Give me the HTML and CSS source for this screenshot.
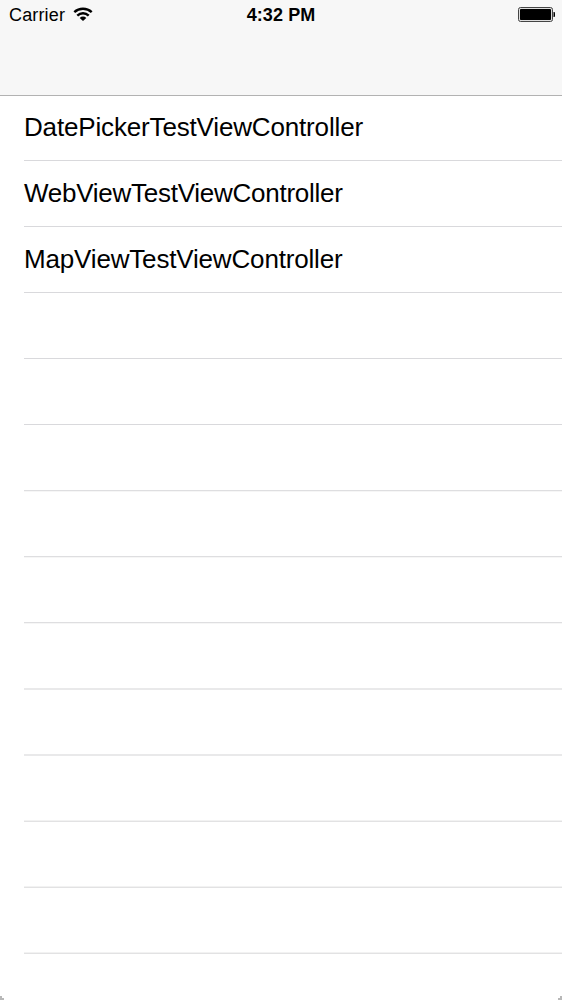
FILE: index.html
```html
<!DOCTYPE html>
<html lang="en">
<head>
<meta charset="utf-8">
<title>Controllers</title>
<link rel="stylesheet" href="styles.css">
</head>
<body>
<main class="screen">
  <header class="navbar">
    <div class="status">
      <div class="status-left">
        <span class="carrier">Carrier</span>
        <svg class="wifi" width="20" height="15" viewBox="0 0 20 15" fill="none" stroke="#000" stroke-width="2.4">
          <path d="M1.3 5.2C6.2.6 13.8.6 18.7 5.2"/>
          <path d="M4.3 8.7C7.6 5.5 12.4 5.5 15.7 8.7"/>
          <path d="M10 14L6.7 10.9C8.6 9.1 11.4 9.1 13.3 10.9Z" fill="#000" stroke="none"/>
        </svg>
      </div>
      <span class="time">4:32 PM</span>
      <div class="status-right">
        <svg class="battery" width="38" height="16" viewBox="0 0 38 16">
          <rect x=".5" y=".5" width="34" height="14" rx="2" fill="#ddd" stroke="#444"/>
          <rect x="2" y="2" width="31" height="11" rx=".8" fill="#000"/>
          <path d="M35.5 5H36.2Q37 5 37 6.2V8.8Q37 10 36.2 10H35.5Z" fill="#000"/>
        </svg>
      </div>
    </div>
  </header>
  <ul class="list">
    <li class="row"><span class="label label-date">DatePickerTestViewController</span></li>
    <li class="row"><span class="label label-web">WebViewTestViewController</span></li>
    <li class="row"><span class="label label-map">MapViewTestViewController</span></li>
    <li class="row"></li>
    <li class="row"></li>
    <li class="row soft-low"></li>
    <li class="row soft-low"></li>
    <li class="row soft-low"></li>
    <li class="row soft-even"></li>
    <li class="row soft-even"></li>
    <li class="row soft-high"></li>
    <li class="row soft-high"></li>
    <li class="row soft-high"></li>
  </ul>
  <footer class="corners">
    <svg width="4" height="4" viewBox="0 0 4 4" fill="#b8b8b8"><path d="M0 0H2V2H4V4H0Z"/></svg>
    <svg width="4" height="4" viewBox="0 0 4 4" fill="#b8b8b8"><path d="M4 0H2V2H0V4H4Z"/></svg>
  </footer>
</main>
</body>
</html>
```
FILE: styles.css
```css
* {
  box-sizing: border-box;
}

body {
  margin: 0;
  background: #fff;
  color: #000;
  font-family: "Liberation Sans", Arial, sans-serif;
}

.screen {
  display: flex;
  flex-direction: column;
  height: 1000px;
  overflow: hidden;
}

.navbar {
  flex: none;
  height: 96px;
  background: #f7f7f7;
  border-bottom: 1px solid #b2b2b2;
}

.status {
  display: grid;
  grid-template-columns: 1fr auto 1fr;
  grid-template-rows: 29px;
  height: 29px;
  padding: 0 6px 0 9px;
  align-items: center;
  font-size: 18px;
  line-height: 27px;
}

.status-left {
  display: flex;
  align-items: center;
  gap: 8px;
  height: 29px;
}

.carrier {
  padding-top: 2px;
  letter-spacing: 0.15px;
}

.wifi,
.battery {
  display: block;
}

.time {
  margin-right: 3px;
  padding-top: 2px;
  font-weight: bold;
  letter-spacing: 0.1px;
}

.status-right {
  display: flex;
  justify-content: flex-end;
}

.list {
  flex: none;
  margin: 0;
  padding: 0 0 0 24px;
  list-style: none;
}

/* Each row ends in a two-step hairline. */
.row {
  --line-top: #d9d9dc;
  --line-bottom: #fff;
  height: 66px;
  padding-top: 16px;
  border-bottom: 1px solid var(--line-bottom);
  box-shadow: inset 0 -1px var(--line-top);
}

.soft-low {
  --line-top: #dedee0;
  --line-bottom: #f6f6f6;
}

.soft-even {
  --line-top: #e9e9ea;
  --line-bottom: #e9e9ea;
}

.soft-high {
  --line-top: #f2f2f2;
  --line-bottom: #e2e2e3;
}

.label {
  display: block;
  font-size: 26px;
  line-height: 30px;
  white-space: nowrap;
}

.label-date {
  letter-spacing: -0.16px;
}

.label-web {
  letter-spacing: -0.26px;
}

.label-map {
  letter-spacing: -0.17px;
}

.corners {
  display: flex;
  justify-content: space-between;
  margin-top: auto;
}
```
